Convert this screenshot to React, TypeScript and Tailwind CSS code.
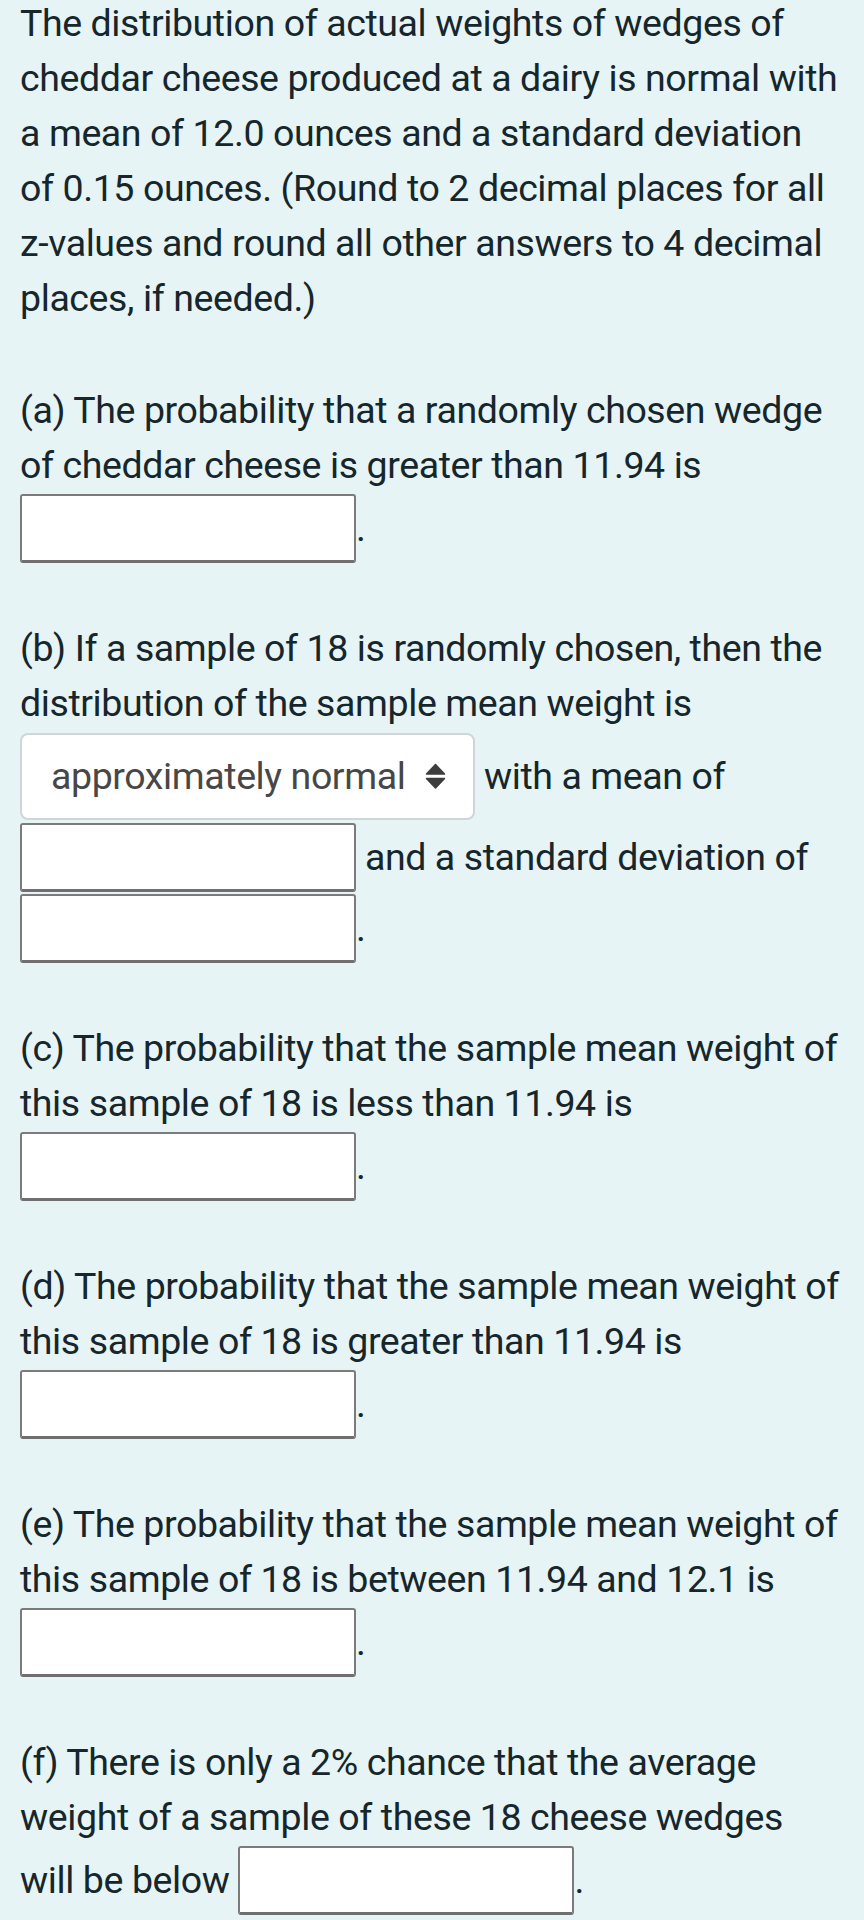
import React from "react";

const AnswerBox = () => (
  <input
    type="text"
    aria-label="answer"
    className="my-[1px] inline-block h-[69px] w-[336px] rounded-[3px] border-2 border-[#7b7b7b] border-b-[3px] border-b-[#6f6f6f] bg-white px-3 align-baseline text-[37.5px] outline-none"
  />
);

const SortArrows = () => (
  <svg width="21" height="27" viewBox="0 0 21 27" className="shrink-0" aria-hidden="true">
    <path d="M10.5 1.5 L19.5 11 L1.5 11 Z" fill="#3d3d3d" stroke="#3d3d3d" strokeWidth="1.5" strokeLinejoin="round" />
    <path d="M1.5 15.5 L19.5 15.5 L10.5 25 Z" fill="#3d3d3d" stroke="#3d3d3d" strokeWidth="1.5" strokeLinejoin="round" />
  </svg>
);

const Part: React.FC<{ children: React.ReactNode }> = ({ children }) => (
  <p className="mt-[57px]">{children}</p>
);

export default function App() {
  return (
    <div className="min-h-screen overflow-hidden bg-[#e6f4f6] font-[Roboto,sans-serif] text-[37.5px] leading-[55px] tracking-[-0.4px] text-[#16262b]">
      <div className="-mt-[4px] pl-[20px] pr-[22px]">
        <p>
          The distribution of actual weights of wedges of cheddar cheese produced at a dairy is
          normal with a mean of 12.0 ounces and a standard deviation of 0.15 ounces. (Round to 2
          decimal places for all z-values and round all other answers to 4 decimal places, if
          needed.)
        </p>

        <Part>
          (a) The probability that a randomly chosen wedge of cheddar cheese is greater than 11.94
          is <AnswerBox />.
        </Part>

        <Part>
          (b) If a sample of 18 is randomly chosen, then the distribution of the sample mean weight
          is{" "}
          <span className="my-[2px] inline-flex h-[87px] w-[455px] items-center justify-between rounded-[8px] border-2 border-[#cfd5d8] bg-white pl-[29px] pr-[27px] align-baseline text-[#474747]">
            <span>approximately normal</span>
            <SortArrows />
          </span>{" "}
          with a mean of <AnswerBox /> and a standard deviation of <AnswerBox />.
        </Part>

        <Part>
          (c) The probability that the sample mean weight of this sample of 18 is less than 11.94
          is <AnswerBox />.
        </Part>

        <Part>
          (d) The probability that the sample mean weight of this sample of 18 is greater than 11.94
          is <AnswerBox />.
        </Part>

        <Part>
          (e) The probability that the sample mean weight of this sample of 18 is between 11.94 and
          12.1 is <AnswerBox />.
        </Part>

        <Part>
          (f) There is only a 2% chance that the average weight of a sample of these 18 cheese
          wedges will be below <AnswerBox />.
        </Part>
      </div>
    </div>
  );
}
